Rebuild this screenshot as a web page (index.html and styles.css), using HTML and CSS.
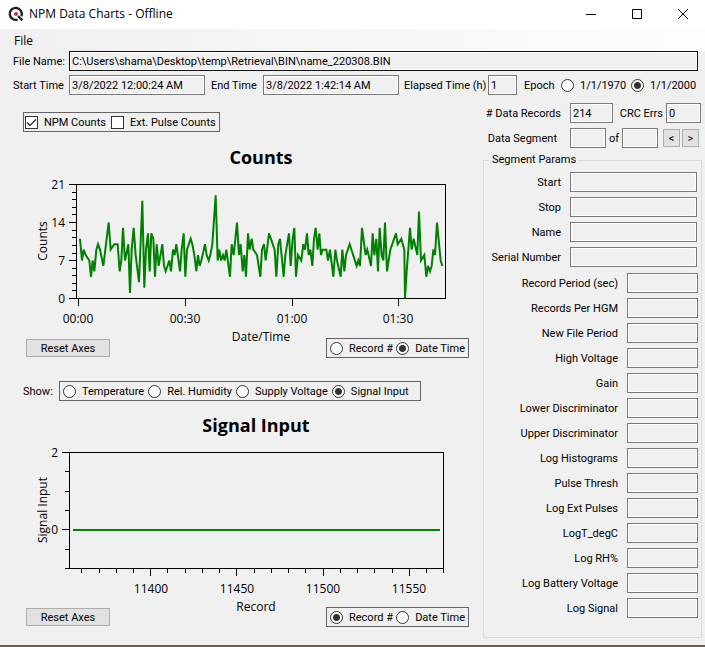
FILE: index.html
```html
<!DOCTYPE html>
<html lang="en">
<head>
<meta charset="utf-8">
<title>NPM Data Charts - Offline</title>
<link rel="stylesheet" href="styles.css">
</head>
<body>
<div class="window">
  <header class="titlebar">
    <svg class="app-icon" viewBox="0 0 16 16" width="16" height="16" aria-hidden="true">
      <path d="M9.6 13.6A6 6 0 1 1 13.3 10.2" fill="none" stroke="#222" stroke-width="2.4"/>
      <path d="M10 10l4.400 4.400" stroke="#222" stroke-width="2.4"/>
      <circle cx="8" cy="8" r="2" fill="#d0303a"/>
    </svg>
    <h1 class="title">NPM Data Charts - Offline</h1>
    <div class="win-buttons">
      <button type="button" aria-label="Minimize"><svg viewBox="0 0 12 12" width="12" height="12"><path d="M1 6.500h10"/></svg></button>
      <button type="button" aria-label="Maximize"><svg viewBox="0 0 12 12" width="12" height="12"><path d="M1.500 1.500h9v9h-9z"/></svg></button>
      <button type="button" aria-label="Close"><svg viewBox="0 0 12 12" width="12" height="12"><path d="M1 1l10 10M11 1L1 11"/></svg></button>
    </div>
  </header>
  <nav class="menubar"><button type="button" class="menu-item">File</button></nav>

  <div class="row file-row">
    <label class="lead" for="file">File Name:</label>
    <input id="file" class="field strong grow" readonly value="C:\Users\shama\Desktop\temp\Retrieval\BIN\name_220308.BIN">
  </div>
  <div class="row time-row">
    <label class="lead" for="start-time">Start Time</label>
    <input id="start-time" class="field time" readonly value="3/8/2022 12:00:24 AM">
    <label class="end-label" for="end-time">End Time</label>
    <input id="end-time" class="field time" readonly value="3/8/2022 1:42:14 AM">
    <label class="elapsed-label" for="elapsed">Elapsed Time (h)</label>
    <input id="elapsed" class="field elapsed" readonly value="1">
    <span class="epoch-label">Epoch</span>
    <label class="option epoch"><input type="radio" name="epoch">1/1/1970</label>
    <label class="option epoch"><input type="radio" name="epoch" checked>1/1/2000</label>
  </div>

  <main class="content">
    <section class="charts">
      <div class="group series">
        <label class="option"><input type="checkbox" checked>NPM Counts</label>
        <label class="option"><input type="checkbox">Ext. Pulse Counts</label>
      </div>

      <svg class="chart" viewBox="0 0 483 206" role="img" aria-label="Counts chart">
        <text class="chart-title" x="261" y="32">Counts</text>
        <path class="axis" d="M76.500 52.500H445.500V166.500H76.500Z
          M69 52.500h7M69 90.500h7M69 128.500h7M69 166.500h7
          M72 60.500h4M72 67.500h4M72 75.500h4M72 82.500h4M72 98.500h4M72 105.500h4M72 113.500h4M72 121.500h4M72 136.500h4M72 143.500h4M72 151.500h4M72 158.500h4
          M78.500 167v7M185.500 167v7M292.500 167v7M398.500 167v7"/>
        <g class="tick end"><text x="65" y="57">21</text><text x="65" y="95">14</text><text x="65" y="133">7</text><text x="65" y="171">0</text></g>
        <g class="tick"><text x="78" y="191">00:00</text><text x="185" y="191">00:30</text><text x="292" y="191">01:00</text><text x="398" y="191">01:30</text></g>
        <text class="axis-title" x="261" y="209">Date/Time</text>
        <text class="axis-title" transform="translate(47 109) rotate(-90)">Counts</text>
        <polyline class="line" transform="translate(20 166.500) scale(.33333 -5.43)" points="180,11 186,7 191,9 197,8 208,7 213,4 218,7 223,5 229,9 234,10 240,9 250,6 256,9 266,14 272,9 283,10 293,10 299,5 304,7 309,13 315,7 325,10 330,1 335,9 341,13 347,8 357,3 367,18 373,2 378,9 384,12 389,5 394,12 400,11 405,4 410,10 416,6 427,10 432,6 437,5 448,7 453,5 459,9 464,8 469,10 480,5 485,9 491,12 496,4 501,9 512,11 517,10 523,8 529,5 534,8 539,6 544,7 555,10 560,8 566,7 571,8 577,10 587,19 593,7 598,9 603,7 609,8 614,7 619,9 630,4 635,10 641,8 651,14 657,8 662,10 668,5 673,8 678,4 684,12 689,9 695,11 700,9 711,8 721,4 726,9 732,10 737,7 747,12 764,9 769,4 775,10 780,11 791,4 796,8 807,12 812,6 818,11 823,13 828,4 834,8 844,7 850,10 855,9 861,12 866,8 871,9 877,6 882,11 887,13 893,9 898,12 903,8 908,9 919,9 924,7 930,9 940,4 946,9 951,7 962,4 967,9 973,5 978,8 989,10 1010,6 1015,7 1020,6 1026,13 1037,8 1042,9 1053,6 1058,12 1063,8 1069,11 1074,5 1079,13 1085,8 1090,7 1095,14 1101,5 1111,9 1128,12 1133,10 1144,11 1153,9 1155,0 1160,5 1165,9 1170,13 1175,9 1181,11 1192,8 1197,16 1203,7 1213,8 1219,4 1224,6 1230,5 1235,6 1240,9 1245,8 1251,14 1262,7 1267,6"/>
      </svg>
      <div class="chart-controls">
        <button type="button" class="button">Reset Axes</button>
        <div class="group axis-mode">
          <label class="option"><input type="radio" name="axis1">Record #</label>
          <label class="option"><input type="radio" name="axis1" checked>Date Time</label>
        </div>
      </div>

      <div class="show-row">
        <span class="show-label">Show:</span>
        <div class="group show">
          <label class="option"><input type="radio" name="show">Temperature</label>
          <label class="option"><input type="radio" name="show">Rel. Humidity</label>
          <label class="option"><input type="radio" name="show">Supply Voltage</label>
          <label class="option"><input type="radio" name="show" checked>Signal Input</label>
        </div>
      </div>

      <svg class="chart" viewBox="0 0 483 206" role="img" aria-label="Signal Input chart">
        <text class="chart-title" x="256" y="31">Signal Input</text>
        <path class="axis" d="M69.500 51.500H443.500V167.500H69.500Z
          M62 51.500h7M62 128.500h7
          M65 70.500h4M65 90.500h4M65 109.500h4M65 148.500h4M65 167.500h4
          M81.500 168v4M99.500 168v4M116.500 168v4M133.500 168v4M150.500 168v7M167.500 168v4M185.500 168v4M202.500 168v4M219.500 168v4M236.500 168v7M254.500 168v4M271.500 168v4M288.500 168v4M305.500 168v4M323.500 168v7M340.500 168v4M357.500 168v4M374.500 168v4M392.500 168v4M409.500 168v7M426.500 168v4M443.500 168v4"/>
        <g class="tick end"><text x="58" y="56">2</text><text x="58" y="133">0</text></g>
        <g class="tick"><text x="151" y="192">11400</text><text x="237" y="192">11450</text><text x="323" y="192">11500</text><text x="409" y="192">11550</text></g>
        <text class="axis-title" x="256" y="210">Record</text>
        <text class="axis-title" transform="translate(47 109) rotate(-90)">Signal Input</text>
        <path class="line" d="M73 129H440"/>
      </svg>
      <div class="chart-controls">
        <button type="button" class="button">Reset Axes</button>
        <div class="group axis-mode">
          <label class="option"><input type="radio" name="axis2" checked>Record #</label>
          <label class="option"><input type="radio" name="axis2">Date Time</label>
        </div>
      </div>
    </section>

    <aside class="side">
      <div class="side-row">
        <label class="side-label" for="records"># Data Records</label>
        <input id="records" class="field records" readonly value="214">
        <label class="crc-label" for="crc">CRC Errs</label>
        <input id="crc" class="field crc" readonly value="0">
      </div>
      <div class="side-row">
        <label class="side-label segment-label" for="segment">Data Segment</label>
        <input id="segment" class="field segment" readonly>
        <label class="of" for="segments">of</label>
        <input id="segments" class="field segment" readonly>
        <button type="button" class="button step first">&lt;</button>
        <button type="button" class="button step">&gt;</button>
      </div>
      <fieldset class="params">
        <legend>Segment Params</legend>
        <div class="param wide"><label for="p1">Start</label><input id="p1" class="field" readonly></div>
        <div class="param wide"><label for="p2">Stop</label><input id="p2" class="field" readonly></div>
        <div class="param wide"><label for="p3">Name</label><input id="p3" class="field" readonly></div>
        <div class="param wide"><label for="p4">Serial Number</label><input id="p4" class="field" readonly></div>
        <div class="narrow-params">
          <div class="param"><label for="p5">Record Period (sec)</label><input id="p5" class="field" readonly></div>
          <div class="param"><label for="p6">Records Per HGM</label><input id="p6" class="field" readonly></div>
          <div class="param"><label for="p7">New File Period</label><input id="p7" class="field" readonly></div>
          <div class="param"><label for="p8">High Voltage</label><input id="p8" class="field" readonly></div>
          <div class="param"><label for="p9">Gain</label><input id="p9" class="field" readonly></div>
          <div class="param"><label for="p10">Lower Discriminator</label><input id="p10" class="field" readonly></div>
          <div class="param"><label for="p11">Upper Discriminator</label><input id="p11" class="field" readonly></div>
          <div class="param"><label for="p12">Log Histograms</label><input id="p12" class="field" readonly></div>
          <div class="param"><label for="p13">Pulse Thresh</label><input id="p13" class="field" readonly></div>
          <div class="param"><label for="p14">Log Ext Pulses</label><input id="p14" class="field" readonly></div>
          <div class="param"><label for="p15">LogT_degC</label><input id="p15" class="field" readonly></div>
          <div class="param"><label for="p16">Log RH%</label><input id="p16" class="field" readonly></div>
          <div class="param"><label for="p17">Log Battery Voltage</label><input id="p17" class="field" readonly></div>
          <div class="param"><label for="p18">Log Signal</label><input id="p18" class="field" readonly></div>
        </div>
      </fieldset>
    </aside>
  </main>
</div>
</body>
</html>
```
FILE: styles.css
```css
* { box-sizing: border-box; }

body {
  margin: 0;
  background: #f0f0f0;
  color: #000;
  font: 11px/17px Roboto, "Liberation Sans", sans-serif;
}

input, button { font: inherit; color: inherit; margin: 0; }
label, span, legend { white-space: nowrap; }

.window {
  min-height: 100vh;
  display: flex;
  flex-direction: column;
  border-bottom: 2px solid #6b5f4a;
}

.titlebar {
  display: flex;
  align-items: center;
  height: 29px;
  padding: 0 0 2px 8px;
  background: #fff;
}
.title {
  flex: 1;
  margin: 0 0 0 5px;
  font: 12px/16px "Open Sans", "Noto Sans", sans-serif;
}
.win-buttons { display: flex; margin-right: -1px; }
.win-buttons button {
  width: 46px;
  height: 27px;
  padding: 0;
  border: 0;
  background: none;
  display: grid;
  place-items: center;
}
.win-buttons path { fill: none; stroke: #000; }

.menubar {
  height: 22px;
  padding: 3px 8px 0;
  background: linear-gradient(90deg, #f0f0f0, #fdfdfd);
}
.menu-item {
  display: block;
  border: 0;
  padding: 0 6px;
  background: none;
  font: 12px/18px "Open Sans", "Noto Sans", sans-serif;
}

.row { display: flex; align-items: center; padding: 0 7px 0 13px; }
.row > * { flex: none; }
.time-row { margin-top: 4px; padding-right: 0; }
.lead { width: 56px; }

.field {
  height: 20px;
  min-width: 0;
  padding: 0 2px;
  border: 1px solid #7a7a7a;
  border-radius: 0;
  background: #f0f0f0;
  box-shadow: inset 0 0 0 1px #fff;
}
.strong { border-color: #111; }
.row .grow { flex: 1; }
.time { width: 136px; }
.end-label { width: 58px; padding-left: 6px; }
.elapsed-label { width: 89px; padding-left: 5px; }
.elapsed { width: 29px; }
.epoch-label { width: 37px; margin-left: 7px; }

.option { display: flex; align-items: center; gap: 6px; }
.option input {
  appearance: none;
  flex: none;
  width: 13px;
  height: 13px;
  border: 1px solid #333;
  background: #fff;
}
.option input[type="radio"] { border-radius: 50%; }
.option input[type="radio"]:checked {
  background: radial-gradient(circle, #333 3px, #fff 4px);
}
.option input[type="checkbox"]:checked {
  background: #fff url("data:image/svg+xml,%3Csvg xmlns='http://www.w3.org/2000/svg' viewBox='0 0 11 11'%3E%3Cpath d='M1 5.500l3 3 6-6' fill='none' stroke='%23222' stroke-width='1.2'/%3E%3C/svg%3E");
}
.epoch { width: 70px; }

.content { flex: 1; display: grid; grid-template-columns: 1fr 222px; }

.charts { padding-top: 17px; }
.group {
  display: flex;
  align-items: center;
  height: 20px;
  padding: 0 3px;
  border: 1px solid #646464;
}
.series { width: 197px; margin-left: 23px; padding-left: 1px; gap: 5px; }

.chart { display: block; width: 100%; overflow: visible; }
.chart text { font-family: "Open Sans", "Noto Sans", sans-serif; text-anchor: middle; }
.chart .chart-title { font-size: 18px; font-weight: 700; }
.chart .tick { font-size: 12px; }
.chart .end text { text-anchor: end; }
.chart .axis-title { font-size: 12px; }
.axis { fill: none; stroke: #000; shape-rendering: crispEdges; }
.line { fill: none; stroke: #008000; stroke-width: 2px; vector-effect: non-scaling-stroke; }

.chart-controls {
  display: flex;
  align-items: center;
  justify-content: space-between;
  padding: 0 14px 0 26px;
}
.button {
  width: 84px;
  height: 18px;
  padding: 1px 0 0;
  border: 1px solid #adadad;
  background: #e1e1e1;
  line-height: 15px;
}
.axis-mode { width: 143px; justify-content: space-between; }

.show-row { display: flex; align-items: center; margin-top: 23px; padding-left: 23px; }
.show-label { width: 36px; }
.show { width: 362px; gap: 4px; }

.side { display: flex; flex-direction: column; padding: 8px 3px 7px 0; }
.side-row { display: flex; align-items: center; height: 20px; margin-bottom: 5px; }
.side-label { width: 87px; padding-right: 9px; text-align: right; }
.segment-label { padding-right: 13px; }
.records { width: 43px; }
.crc-label { width: 53px; padding-right: 3px; text-align: right; }
.crc { width: 35px; }
.segment { width: 36px; }
.of { width: 16px; padding-left: 3px; }
.step { width: 17px; margin-left: 2px; }
.step.first { margin-left: 5px; }

.params {
  flex: 1;
  min-width: 0;
  margin: 0;
  padding: 5px 3px 0 0;
  border: 1px solid #dcdcdc;
}
.params legend { margin-left: 6px; padding: 0 2px; line-height: 14px; }
.param { display: flex; align-items: center; justify-content: flex-end; gap: 9px; height: 20px; margin-bottom: 5px; }
.param .field { width: 71px; }
.param.wide { padding-right: 1px; }
.param.wide .field { width: 127px; }
.narrow-params { padding-top: 1px; }
```
